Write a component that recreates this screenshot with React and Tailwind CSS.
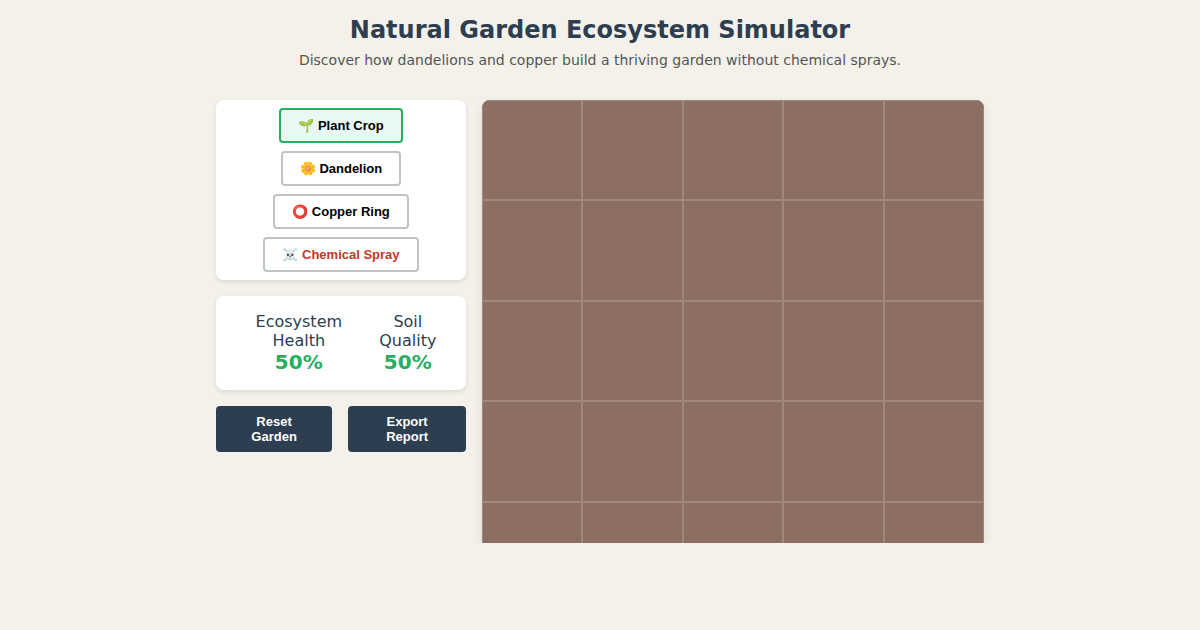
import React, { useState } from "react";
import clsx from "clsx";

const tools = [
  { id: "crop", emoji: "🌱", label: "Plant Crop" },
  { id: "dandelion", emoji: "🌼", label: "Dandelion" },
  { id: "copper", emoji: "⭕", label: "Copper Ring" },
  { id: "spray", emoji: "☠️", label: "Chemical Spray", danger: true },
];

const GRID_SIZE = 5;
const emptyGarden = () => Array(GRID_SIZE * GRID_SIZE).fill(null);

function ToolButton({ tool, active, onSelect }) {
  return (
    <button
      type="button"
      onClick={() => onSelect(tool.id)}
      aria-pressed={active}
      className={clsx(
        "cursor-pointer rounded border-2 px-[17px] py-2 font-['Liberation_Sans',Arial,sans-serif] text-[13px] leading-[15px] font-bold",
        active ? "border-[#27ae60] bg-[#e8f8f5]" : "border-[#bdc3c7] bg-white",
        tool.danger ? "text-[#c0392b]" : "text-black"
      )}
    >
      {tool.emoji} {tool.label}
    </button>
  );
}

function Stat({ label, value }) {
  return (
    <div className="text-center text-base leading-[19px]">
      {label}
      <div className="text-xl leading-6 font-bold text-[#27ae60]">{value}%</div>
    </div>
  );
}

function ActionButton({ children, onClick }) {
  return (
    <button
      type="button"
      onClick={onClick}
      className="cursor-pointer rounded bg-[#2c3e50] px-6 py-2 font-['Liberation_Sans',Arial,sans-serif] text-[13px] leading-[15px] font-bold text-white"
    >
      {children}
    </button>
  );
}

function App() {
  const [activeTool, setActiveTool] = useState("crop");
  const [garden, setGarden] = useState(emptyGarden);

  const place = (index) => {
    setGarden((prev) => prev.map((cell, i) => (i === index ? activeTool : cell)));
  };

  const exportReport = () => {
    console.log({ health: 50, soil: 50, garden });
  };

  return (
    <div className="flex h-screen flex-col bg-[#f4f1ea] pb-[87px] font-['DejaVu_Sans',sans-serif] text-[#2c3e50]">
      <header className="px-4 pt-4 pb-4 text-center">
        <h1 className="text-2xl leading-7 font-bold">Natural Garden Ecosystem Simulator</h1>
        <p className="mt-2 text-sm leading-4 text-[#555555]">
          Discover how dandelions and copper build a thriving garden without chemical sprays.
        </p>
      </header>

      <main className="mx-auto grid min-h-0 w-full max-w-[800px] flex-1 grid-cols-[250px_1fr] items-start gap-4 overflow-hidden p-4">
        <div className="flex flex-col gap-4">
          <div className="flex flex-col items-center gap-2 rounded-lg bg-white p-2 shadow-[0_2px_5px_rgba(0,0,0,0.1)]">
            {tools.map((tool) => (
              <ToolButton key={tool.id} tool={tool} active={activeTool === tool.id} onSelect={setActiveTool} />
            ))}
          </div>

          <div className="flex justify-around rounded-lg bg-white p-4 shadow-[0_2px_5px_rgba(0,0,0,0.1)]">
            <Stat label="Ecosystem Health" value={50} />
            <Stat label="Soil Quality" value={50} />
          </div>

          <div className="flex gap-4">
            <ActionButton onClick={() => setGarden(emptyGarden())}>Reset Garden</ActionButton>
            <ActionButton onClick={exportReport}>Export Report</ActionButton>
          </div>
        </div>

        <div className="rounded-lg shadow-[0_4px_10px_rgba(0,0,0,0.1)]">
          <div className="grid grid-cols-5 overflow-hidden rounded-lg bg-[#8d6e63]">
            {garden.map((cell, index) => (
              <button
                key={index}
                type="button"
                aria-label={`Plot ${index + 1}`}
                onClick={() => place(index)}
                className="aspect-square cursor-pointer border border-[#a1887f] text-4xl"
              >
                {cell && tools.find((tool) => tool.id === cell).emoji}
              </button>
            ))}
          </div>
        </div>
      </main>
    </div>
  );
}

export default App;
